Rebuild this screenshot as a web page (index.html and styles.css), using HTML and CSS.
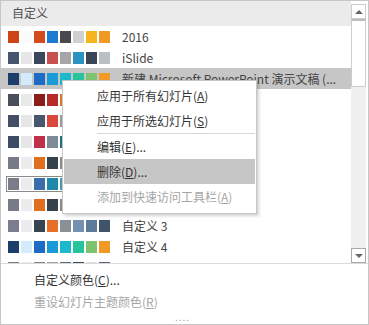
FILE: index.html
```html
<!DOCTYPE html>
<html lang="zh-CN">
<head>
  <meta charset="UTF-8">
  <title>主题颜色</title>
  <link rel="stylesheet" href="styles.css">
</head>
<body>
  <div class="panel">
    <div class="top">
      <div class="list">
        <div class="list-head">自定义</div>

        <div class="row">
          <div class="swatches">
            <i style="background:#d0441a"></i><i style="background:#fbfbfb"></i><i style="background:#d44a1c"></i><i style="background:#1c7bd0"></i><i style="background:#4a4a4e"></i><i style="background:#d0d0d0"></i><i style="background:#f8b41c"></i><i style="background:#f09a26"></i>
          </div>
          <span class="name">2016</span>
        </div>
        <div class="row">
          <div class="swatches">
            <i style="background:#475670"></i><i style="background:#e6e6e6"></i><i style="background:#3a475c"></i><i style="background:#c8504e"></i><i style="background:#a6a6a6"></i><i style="background:#2b93c2"></i><i style="background:#3a4658"></i><i style="background:#babfc5"></i>
          </div>
          <span class="name">iSlide</span>
        </div>
        <div class="row hover">
          <div class="swatches">
            <i style="background:#1b3e6a"></i><i style="background:#d4ebfb"></i><i style="background:#1c6bc4"></i><i style="background:#1b9ad8"></i><i style="background:#1cb8cc"></i><i style="background:#25c49c"></i><i style="background:#7ec46f"></i><i style="background:#f29a26"></i>
          </div>
          <span class="name">新建 Microsoft PowerPoint 演示文稿 (...</span>
        </div>
        <!-- rows under the context menu: names hidden by it -->
        <div class="row">
          <div class="swatches">
            <i style="background:#4a4f5c"></i><i style="background:#e8e8ea"></i><i style="background:#8a1c1c"></i><i style="background:#b82a2a"></i><i style="background:#e07a26"></i><i style="background:#7a7a7a"></i><i style="background:#5a5a5a"></i><i style="background:#c0c0c0"></i>
          </div>
        </div>
        <div class="row">
          <div class="swatches">
            <i style="background:#444e66"></i><i style="background:#e6e6e8"></i><i style="background:#4a5570"></i><i style="background:#d8493c"></i><i style="background:#9a9a9a"></i><i style="background:#6a7a8a"></i><i style="background:#3a4656"></i><i style="background:#c4c4c4"></i>
          </div>
        </div>
        <div class="row">
          <div class="swatches">
            <i style="background:#3d4c66"></i><i style="background:#e6e6e8"></i><i style="background:#c22f4a"></i><i style="background:#7d8b98"></i><i style="background:#236f82"></i><i style="background:#5a6a7a"></i><i style="background:#8a9aa8"></i><i style="background:#b0b8c0"></i>
          </div>
        </div>
        <div class="row">
          <div class="swatches">
            <i style="background:#787a88"></i><i style="background:#ececee"></i><i style="background:#e0701e"></i><i style="background:#36414e"></i><i style="background:#8a8a8a"></i><i style="background:#7591b1"></i><i style="background:#5c7b9b"></i><i style="background:#3f5469"></i>
          </div>
        </div>
        <div class="row">
          <div class="swatches boxed">
            <i style="background:#7a7c8a"></i><i style="background:#ececee"></i><i style="background:#3b6ea9"></i><i style="background:#1d8aab"></i><i style="background:#4a9ab0"></i><i style="background:#6a8aa8"></i><i style="background:#5a6a7a"></i><i style="background:#a0a8b0"></i>
          </div>
        </div>
        <div class="row">
          <div class="swatches">
            <i style="background:#787a88"></i><i style="background:#ececee"></i><i style="background:#e0701e"></i><i style="background:#36414e"></i><i style="background:#8a8a8a"></i><i style="background:#7591b1"></i><i style="background:#5c7b9b"></i><i style="background:#3f5469"></i>
          </div>
        </div>
        <div class="row">
          <div class="swatches">
            <i style="background:#7b7d8e"></i><i style="background:#ececee"></i><i style="background:#36454f"></i><i style="background:#e86f28"></i><i style="background:#8b8f96"></i><i style="background:#7591b1"></i><i style="background:#5c7b9b"></i><i style="background:#3f5469"></i>
          </div>
          <span class="name">自定义 3</span>
        </div>
        <div class="row">
          <div class="swatches">
            <i style="background:#1b3e6a"></i><i style="background:#d4ebfb"></i><i style="background:#1c6bc4"></i><i style="background:#1b9ad8"></i><i style="background:#1cb8cc"></i><i style="background:#25c49c"></i><i style="background:#7ec46f"></i><i style="background:#f29a26"></i>
          </div>
          <span class="name">自定义 4</span>
        </div>
        <div class="row">
          <div class="swatches">
            <i style="background:#7a7c88"></i><i style="background:#ececec"></i><i style="background:#808080"></i><i style="background:#a0a0a0"></i><i style="background:#5a6a7a"></i><i style="background:#3a4a5a"></i><i style="background:#e0e0e0"></i><i style="background:#5a6070"></i>
          </div>
        </div>
      </div>

      <div class="scroll">
        <div class="scroll-btn"><span class="tri up"></span></div>
        <div class="thumb"></div>
        <div class="track"></div>
        <div class="scroll-btn down"><span class="tri dn"></span></div>
      </div>
    </div>

    <div class="bottom">
      <div class="cmd">自定义颜色(<u>C</u>)...</div>
      <div class="cmd off">重设幻灯片主题颜色(<u>R</u>)</div>
      <div class="grip">....</div>
    </div>

    <div class="menu">
      <div class="item">应用于所有幻灯片(<u>A</u>)</div>
      <div class="item">应用于所选幻灯片(<u>S</u>)</div>
      <div class="sep"></div>
      <div class="item">编辑(<u>E</u>)...</div>
      <div class="item on">删除(<u>D</u>)...</div>
      <div class="item off">添加到快速访问工具栏(<u>A</u>)</div>
    </div>
  </div>
</body>
</html>
```

FILE: styles.css
```css
body {
  margin: 0;
  font-family: "Noto Sans CJK SC", "Noto Sans", sans-serif;
  font-size: 12px;
  color: #444;
  background: #fff;
}
.panel {
  position: relative;
  width: 369px;
  height: 325px;
  box-sizing: border-box;
  border: 1px solid #c6c6c6;
  display: flex;
  flex-direction: column;
}
.top {
  display: flex;
  height: 262px;
  border-bottom: 1px solid #dadada;
}
.list {
  width: 350px;
  overflow: hidden;
}
.list-head {
  height: 25px;
  line-height: 24px;
  padding-left: 11px;
  background: #ecebec;
  color: #505050;
}
.row {
  display: flex;
  align-items: center;
  height: 21px;
}
.row.hover {
  background: #c6c6c6;
}
.swatches {
  display: flex;
  gap: 2px;
  width: 103px;
  margin-left: 5px;
  padding: 1px 0 1px 1px;
  border: 1px solid transparent;
}
.swatches.boxed {
  border-color: #8a8a8a;
}
.swatches i {
  width: 11px;
  height: 12px;
}
.name {
  margin-left: 10px;
  white-space: nowrap;
  line-height: 21px;
}
.scroll {
  width: 15px;
  margin: 3px 2px 0 0;
  height: 259px;
  display: flex;
  flex-direction: column;
  background: #f0f0f0;
}
.scroll-btn {
  height: 15px;
  box-sizing: border-box;
  border: 1px solid #cdcdcd;
  background: #fff;
  display: flex;
  align-items: center;
  justify-content: center;
}
.scroll-btn.down {
  border-color: #a9a9a9;
}
.tri {
  width: 0;
  height: 0;
  border-left: 4px solid transparent;
  border-right: 4px solid transparent;
}
.tri.up {
  border-bottom: 4px solid #666;
}
.tri.dn {
  border-top: 4px solid #666;
}
.thumb {
  height: 68px;
  box-sizing: border-box;
  border: 1px solid #cdcdcd;
  border-top: 2px solid #bcbcbc;
  background: #fff;
}
.track {
  flex: 1;
}
.bottom {
  flex: 1;
  padding-top: 5px;
  position: relative;
}
.cmd {
  height: 22px;
  line-height: 22px;
  padding-left: 33px;
  color: #333;
}
.cmd.off {
  color: #a6a6a6;
}
.grip {
  position: absolute;
  left: 174px;
  bottom: 2px;
  font-size: 10px;
  letter-spacing: 1px;
  color: #a0a0a0;
  line-height: 10px;
}
.menu {
  position: absolute;
  left: 61px;
  top: 79px;
  width: 195px;
  box-sizing: border-box;
  padding: 2px 1px 4px;
  background: #fff;
  border: 1px solid #c6c6c6;
  box-shadow: 2px 2px 3px rgba(0, 0, 0, 0.18);
  color: #333;
}
.item {
  height: 25px;
  line-height: 25px;
  padding-left: 33px;
}
.item.on {
  background: #c6c6c6;
}
.item.off {
  color: #a6a6a6;
}
.sep {
  height: 1px;
  margin: 0 0 0 33px;
  background: #d8d8d8;
}
```
